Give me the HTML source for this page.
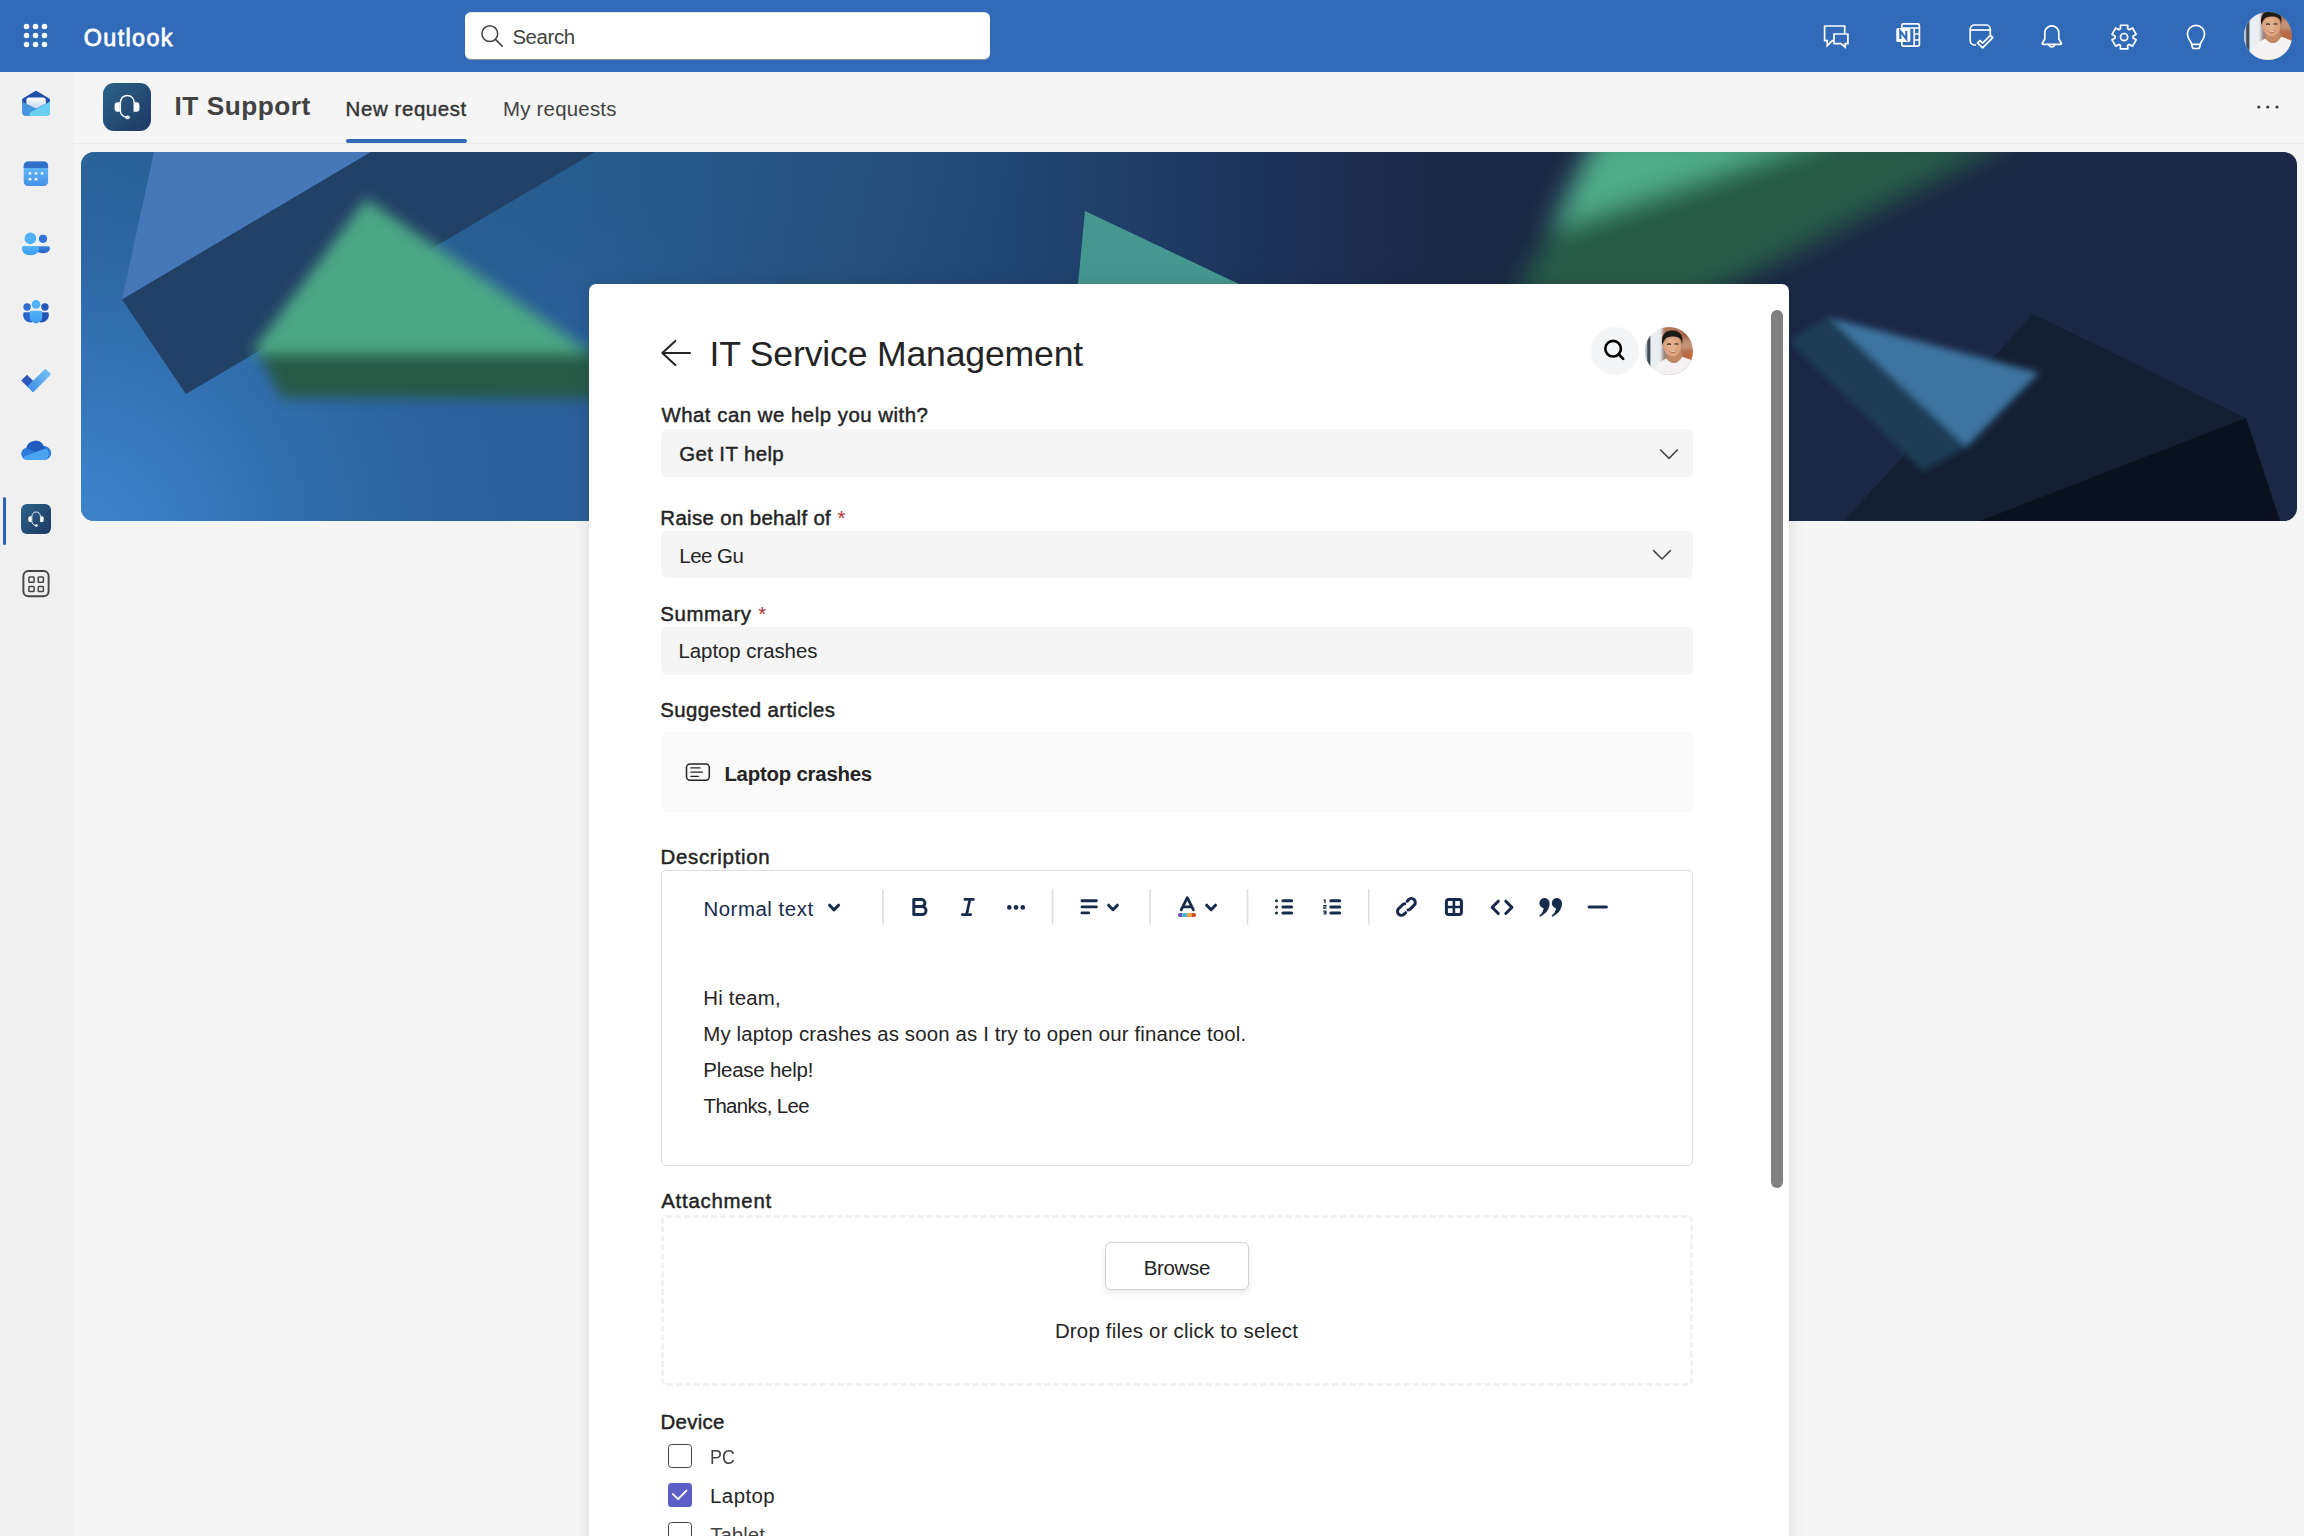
<!DOCTYPE html>
<html lang="en"><head><meta charset="utf-8"><title>IT Support - Outlook</title>
<style>
*{margin:0;padding:0;box-sizing:border-box}
html,body{width:2304px;height:1536px;overflow:hidden;background:#f5f5f5;font-family:"Liberation Sans",sans-serif}
.a{position:absolute}
.t{position:absolute;white-space:nowrap;line-height:1}
.s{-webkit-text-stroke:0.45px currentColor}
.b{font-weight:bold}
svg{position:absolute;left:0;top:0;overflow:visible}
#root{position:absolute;left:0;top:0;width:2304px;height:1536px;overflow:hidden;background:#f5f5f5}
</style></head><body>
<div id="root">
<!-- top bar -->
<div class="a" style="left:0;top:0;width:2304px;height:72px;background:#316ab8"></div>
<div class="a" style="left:465px;top:12px;width:525px;height:47.5px;background:#fff;border-radius:6px;border-top:1px solid #e4e4e4;border-bottom:1.5px solid #8d9198"></div>
<!-- rail -->
<div class="a" style="left:0;top:72px;width:73px;height:1464px;background:#f0f0f0"></div>
<div class="a" style="left:3px;top:497px;width:3px;height:48px;border-radius:2px;background:#2f62b5"></div>
<!-- app header -->
<div class="a" style="left:73px;top:143px;width:2231px;height:1px;background:#e9e9e9"></div>
<div class="a" style="left:346px;top:139px;width:121px;height:4px;border-radius:2px;background:#3069b8"></div>
<div class="a" style="left:103px;top:83px;width:48px;height:48px;border-radius:11px;background:linear-gradient(135deg,#2b6388 0%,#1d3864 100%)"></div>
<div class="a" style="left:21px;top:504px;width:30px;height:30px;border-radius:6px;background:linear-gradient(135deg,#2b6388 0%,#1d3864 100%)"></div>
<!-- banner -->
<svg width="2304" height="1536" viewBox="0 0 2304 1536">
<defs>
<clipPath id="bc"><rect x="81" y="152" width="2216" height="369" rx="13" ry="13"/></clipPath>
<linearGradient id="bg1" gradientUnits="userSpaceOnUse" x1="81" y1="0" x2="1470" y2="0">
<stop offset="0" stop-color="#2b619b"/><stop offset="0.36" stop-color="#2a5d96"/><stop offset="0.45" stop-color="#28578b"/><stop offset="0.52" stop-color="#265180"/><stop offset="0.66" stop-color="#224775"/><stop offset="0.79" stop-color="#1e3a62"/><stop offset="0.92" stop-color="#1c2d4f"/><stop offset="1" stop-color="#1b2845"/>
</linearGradient>
<radialGradient id="bg2" gradientUnits="userSpaceOnUse" cx="81" cy="540" r="640">
<stop offset="0" stop-color="#3d86cf" stop-opacity="0.95"/><stop offset="0.12" stop-color="#3c84cc" stop-opacity="0.85"/><stop offset="0.3" stop-color="#3a80c8" stop-opacity="0.52"/><stop offset="0.5" stop-color="#3576bd" stop-opacity="0.28"/><stop offset="0.75" stop-color="#316dae" stop-opacity="0.12"/><stop offset="1" stop-color="#2f69ab" stop-opacity="0"/>
</radialGradient>
<radialGradient id="bg3" gradientUnits="userSpaceOnUse" cx="0" cy="0" r="1" gradientTransform="translate(330,152) scale(720,210)">
<stop offset="0" stop-color="#235a84" stop-opacity="0.6"/><stop offset="0.5" stop-color="#235a84" stop-opacity="0.38"/><stop offset="1" stop-color="#235a84" stop-opacity="0"/>
</radialGradient>
<filter id="bl8" x="-20%" y="-20%" width="140%" height="140%"><feGaussianBlur stdDeviation="7"/></filter>
<filter id="bl14" x="-20%" y="-40%" width="140%" height="180%"><feGaussianBlur stdDeviation="13"/></filter>
<filter id="bl4" x="-20%" y="-20%" width="140%" height="140%"><feGaussianBlur stdDeviation="3.5"/></filter>
</defs>
<g clip-path="url(#bc)">
<rect x="81" y="152" width="2216" height="369" fill="url(#bg1)"/>
<rect x="81" y="152" width="1100" height="369" fill="url(#bg3)"/>
<rect x="81" y="152" width="900" height="369" fill="url(#bg2)"/>
<!-- left shapes -->
<polygon points="154,152 371,152 122,299.5" fill="#4577b9"/>
<polygon points="371,152 595,152 186,394 122,299.5" fill="#224166"/>
<g filter="url(#bl8)">
<polygon points="256,350 282,398 640,398 640,350" fill="#255a46"/>
<polygon points="366,199 251,353 640,353 592,353" fill="#4ca785"/>
</g>
<!-- teal triangle -->
<polygon points="1085,211 1240,284.5 1078,284.5" fill="#459890"/>
<!-- top right green -->
<g filter="url(#bl14)">
<polygon points="1800,136 2020,136 1700,300 1512,300 1552,228" fill="#265b46"/>
<polygon points="1598,132 1840,132 1550,230" fill="#50ad89"/>
</g>
<!-- right dark shapes -->
<polygon points="2033,314 2246,418 2280,521 1844,521" fill="#141f33"/>
<polygon points="2246,418 2280,521 1980,521" fill="#0a111e"/>
<g filter="url(#bl4)">
<polygon points="1829,317.5 1788,340 1923,471 1966.5,447" fill="#1e3c54"/>
<polygon points="1829,317.5 2039,373 1966.5,447" fill="#3c74a0"/>
</g>
</g>
</svg>
<!-- header + rail icons -->
<svg width="2304" height="1536" viewBox="0 0 2304 1536">
<defs>
<linearGradient id="gpaper" x1="0" y1="0" x2="0" y2="1"><stop offset="0" stop-color="#ffffff"/><stop offset="1" stop-color="#c6d4ec"/></linearGradient>
<linearGradient id="gcal" x1="0" y1="0" x2="0" y2="1"><stop offset="0.25" stop-color="#64b7f9"/><stop offset="1" stop-color="#4390e6"/></linearGradient>
<linearGradient id="gp1" x1="0" y1="0" x2="0" y2="1"><stop offset="0" stop-color="#52b4fa"/><stop offset="1" stop-color="#3d9bef"/></linearGradient>
<linearGradient id="gp2" x1="0" y1="0" x2="0" y2="1"><stop offset="0" stop-color="#3a84df"/><stop offset="1" stop-color="#2660c4"/></linearGradient>
<linearGradient id="gtodo" x1="0" y1="1" x2="1" y2="0"><stop offset="0" stop-color="#3b8be6"/><stop offset="1" stop-color="#7cc4f6"/></linearGradient>
<clipPath id="avc"><circle cx="0" cy="0" r="24"/></clipPath>
<filter id="avb" x="-10%" y="-10%" width="120%" height="120%"><feGaussianBlur stdDeviation="0.75"/></filter>
<filter id="avb2" x="-10%" y="-10%" width="120%" height="120%"><feGaussianBlur stdDeviation="1.6"/></filter>




</defs>
<!-- waffle -->
<g fill="#fff">
<circle cx="26.5" cy="26.5" r="2.75"/><circle cx="35.5" cy="26.5" r="2.75"/><circle cx="44.5" cy="26.5" r="2.75"/>
<circle cx="26.5" cy="35.5" r="2.75"/><circle cx="35.5" cy="35.5" r="2.75"/><circle cx="44.5" cy="35.5" r="2.75"/>
<circle cx="26.5" cy="44.5" r="2.75"/><circle cx="35.5" cy="44.5" r="2.75"/><circle cx="44.5" cy="44.5" r="2.75"/>
</g>
<!-- search icon -->
<g fill="none" stroke="#424242" stroke-width="1.5" stroke-linecap="round"><circle cx="489.8" cy="33.7" r="7.9"/><path d="M495.5 39.4 L502.2 46.1"/></g>
<!-- header right icons -->
<g fill="none" stroke="#fff" stroke-width="1.7" stroke-linejoin="miter">
<path d="M1844.7 33.6 V26 H1824.6 V40.6 H1827.3 V45.6 L1832.3 40.6 H1833.8"/>
<path d="M1834 34 H1847.9 V43.6 H1845.2 V47.2 L1841 43.6 H1834 Z"/>
</g>
<!-- onenote -->
<g fill="none" stroke="#fff" stroke-width="1.7">
<path d="M1901.8 28 V25.4 a1.6 1.6 0 0 1 1.6 -1.6 H1917.8 a1.6 1.6 0 0 1 1.6 1.6 V44.6 a1.6 1.6 0 0 1 -1.6 1.6 H1903.4 a1.6 1.6 0 0 1 -1.6 -1.6 V42"/>
<path d="M1903 28 H1919.4 M1914.2 28 V46 M1914.2 34 H1919.4 M1914.2 40 H1919.4"/>
</g>
<rect x="1896.3" y="27.9" width="14" height="14.2" rx="1.6" fill="#fff"/>
<path d="M1900.3 38.9 V31.1 L1906.3 38.9 V31.1" fill="none" stroke="#3069b8" stroke-width="2.1" stroke-linejoin="miter"/>
<!-- calendar check -->
<g fill="none" stroke="#fff" stroke-width="1.7" stroke-linejoin="round">
<path d="M1990.3 35.6 V29.2 a4.2 4.2 0 0 0 -4.2 -4.2 H1974.4 a4.2 4.2 0 0 0 -4.2 4.2 V40.8 a4.2 4.2 0 0 0 4.2 4.2 H1976.2"/>
<path d="M1970.2 30 H1990.3"/>
<path d="M1977.6 42.9 L1980 40.5 L1982.6 43.1 L1990.4 35.3 L1992.8 37.7 L1982.6 47.9 Z"/>
</g>
<!-- bell -->
<g fill="none" stroke="#fff" stroke-width="1.7" stroke-linejoin="round">
<path d="M2051.8 25.8 a7 7 0 0 0 -7 7 v6.2 l-2.5 4.2 a0.8 0.8 0 0 0 0.7 1.2 h17.6 a0.8 0.8 0 0 0 0.7 -1.2 l-2.5 -4.2 v-6.2 a7 7 0 0 0 -7 -7 z"/>
<path d="M2049 44.8 a2.9 2.9 0 0 0 5.6 0"/>
</g>
<!-- gear -->
<g fill="none" stroke="#fff" stroke-width="1.7" stroke-linejoin="round">
<path d="M2120.43 28.88 L2120.44 25.25 L2127.76 25.25 L2127.77 28.88 L2129.38 29.81 L2132.53 28.00 L2136.19 34.35 L2133.05 36.17 L2133.05 38.03 L2136.19 39.85 L2132.53 46.20 L2129.38 44.39 L2127.77 45.32 L2127.76 48.95 L2120.44 48.95 L2120.43 45.32 L2118.82 44.39 L2115.67 46.20 L2112.01 39.85 L2115.15 38.03 L2115.15 36.17 L2112.01 34.35 L2115.67 28.00 L2118.82 29.81 Z"/>
<circle cx="2124.1" cy="37.1" r="3.6"/>
</g>
<!-- bulb -->
<g fill="none" stroke="#fff" stroke-width="1.7" stroke-linejoin="round">
<path d="M2191.7 44.4 c-0.5 -3.4 -4.3 -5.2 -4.3 -10.4 a8.6 8.6 0 0 1 17.2 0 c0 5.2 -3.8 7 -4.3 10.4 z"/>
<path d="M2191.7 44.4 l0.5 2.6 a1.9 1.9 0 0 0 1.9 1.5 h3.8 a1.9 1.9 0 0 0 1.9 -1.5 l0.5 -2.6"/>
</g>
<g transform="translate(2268,36)"><g><g clip-path="url(#avc)"><g><g>
 <g filter="url(#avb2)">
 <rect x="-36" y="-40" width="72" height="80" fill="#b2775a"/>
 <rect x="12" y="-34" width="26" height="16" fill="#a5684c"/>
 <rect x="12" y="-16" width="26" height="9" fill="#c49376"/>
 <rect x="14" y="-5" width="24" height="11" fill="#bb6b42"/>
 <rect x="-8" y="-10" width="9" height="16" fill="#9a837a"/>
 <rect x="-36" y="-40" width="29" height="80" fill="#e9eef2"/>
 </g>
 <g filter="url(#avb)">
 <rect x="-24.8" y="-40" width="3" height="80" fill="#b9c3c8"/>
 <rect x="-21.8" y="-40" width="3.2" height="80" fill="#3f4e56"/>
 <path d="M-36 40 V22 L-17 14.5 C-12 8 -6 4.2 -2.6 2.6 C0 6 3 7 5 7 C8 7 11 4.4 13 0.8 C17 2 21 3.6 24 4.8 L36 9 V40 Z" fill="#f4f2f2"/>
 <path d="M-2.6 2.6 C0 6 3 7 5 7 C8 7 11 4.4 13 0.8 L12 -6 H0 Z" fill="#c28763"/>
 <ellipse cx="3.4" cy="-10" rx="8.9" ry="10.4" fill="#dba37e"/>
 <ellipse cx="2.2" cy="-11" rx="5" ry="6.5" fill="#e9bd9b" opacity="0.5"/>
 <path d="M-6.6 -11 C-8.6 -21.5 -3 -26 4 -25.4 C11 -25 15 -20.5 13 -11.5 C12.8 -15.5 11.6 -17.8 9.6 -18.6 C6 -20 0 -19.6 -2.6 -18 C-4.6 -16.6 -5.6 -14.4 -6.6 -11 Z" fill="#1e1a18"/>
 <path d="M-2 -11.6 q2 -1 4 0 M5.4 -11.8 q2 -1 4 0" fill="none" stroke="#2b1f1a" stroke-width="1.1"/>
 <path d="M-0.4 -5.2 C2 -3.6 5.6 -3.6 8 -5.6 C6 -2.2 1.6 -2.2 -0.4 -5.2 Z" fill="#c2675b"/>
 <path d="M0.4 -5 C2.6 -4.2 5.2 -4.2 7.2 -5.2 C5.4 -3.6 2.2 -3.6 0.4 -5 Z" fill="#f3e7e2"/>
 </g>
</g></g></g></g></g>
<g fill="#3a3a3a"><circle cx="2258.8" cy="107" r="1.6"/><circle cx="2267.8" cy="107" r="1.6"/><circle cx="2277" cy="107" r="1.6"/></g>
<!-- headsets -->
<g transform="translate(127,106.8)"><g fill="#fff" stroke="none">
 <path d="M7.2 4.4 V-3.5 C7.2 -8.5 4.2 -11.3 0.25 -11.3 C-3.7 -11.3 -6.7 -8.5 -6.7 -3.5 V3.5 C-6.7 7.6 -3.6 9.8 -0.8 10.4" fill="none" stroke="#fff" stroke-width="1.4" stroke-linecap="round"/>
 <path d="M-7.2 -4.5 H-9.4 a3 3 0 0 0 -3 3 V1.85 a3 3 0 0 0 3 3 H-7.2 Z"/>
 <path d="M7.7 -4.5 H9.45 a3 3 0 0 1 3 3 V1.85 a3 3 0 0 1 -3 3 H7.7 Z"/>
 <ellipse cx="0.5" cy="10.55" rx="2.3" ry="1.9"/>
</g></g>
<g transform="translate(36,519) scale(0.62)"><g fill="#fff" stroke="none">
 <path d="M7.2 4.4 V-3.5 C7.2 -8.5 4.2 -11.3 0.25 -11.3 C-3.7 -11.3 -6.7 -8.5 -6.7 -3.5 V3.5 C-6.7 7.6 -3.6 9.8 -0.8 10.4" fill="none" stroke="#fff" stroke-width="1.4" stroke-linecap="round"/>
 <path d="M-7.2 -4.5 H-9.4 a3 3 0 0 0 -3 3 V1.85 a3 3 0 0 0 3 3 H-7.2 Z"/>
 <path d="M7.7 -4.5 H9.45 a3 3 0 0 1 3 3 V1.85 a3 3 0 0 1 -3 3 H7.7 Z"/>
 <ellipse cx="0.5" cy="10.55" rx="2.3" ry="1.9"/>
</g></g>
<!-- rail: mail -->
<path d="M36 92.2 L48.6 99.6 V108 H23.4 V99.6 Z" fill="#1e4ea8" stroke="#1e4ea8" stroke-width="2.6" stroke-linejoin="round"/>
<rect x="26.4" y="97.4" width="19.4" height="11.4" rx="2.8" fill="url(#gpaper)"/>
<path d="M22 101.6 L36 108.4 L50 101.6 V112 a4 4 0 0 1 -4 4 H26 a4 4 0 0 1 -4 -4 Z" fill="#4795de"/>
<path d="M50 101.8 V112 a4 4 0 0 1 -4 4 H31.4 a2 2 0 0 1 -0.9 -3.8 Z" fill="#6bd0f3"/>
<!-- rail: calendar -->
<rect x="23.7" y="161.5" width="24.4" height="24.6" rx="4.2" fill="url(#gcal)"/>
<path d="M23.7 168 V165.7 a4.2 4.2 0 0 1 4.2 -4.2 H43.9 a4.2 4.2 0 0 1 4.2 4.2 V168 Z" fill="#3070c9"/>
<g fill="#e6f6ff"><circle cx="30" cy="173.4" r="1.45"/><circle cx="36" cy="173.4" r="1.45"/><circle cx="42" cy="173.4" r="1.45"/><circle cx="30" cy="179.2" r="1.45"/><circle cx="36" cy="179.2" r="1.45"/></g>
<!-- rail: people -->
<circle cx="43" cy="238.8" r="4.1" fill="#2f74d6"/>
<path d="M36 246.3 H48.2 a1.8 1.8 0 0 1 1.8 1.8 C50 251.5 47 253.2 43 253.2 C40 253.2 37.5 252.4 36 250.5 Z" fill="url(#gp2)"/>
<circle cx="30.4" cy="238.4" r="5.8" fill="#4fb1f8"/>
<path d="M23.8 246 H37.2 a1.9 1.9 0 0 1 1.9 1.9 C39.1 252.6 35.4 255.2 30.5 255.2 C25.6 255.2 21.9 252.6 21.9 247.9 a1.9 1.9 0 0 1 1.9 -1.9 Z" fill="url(#gp1)"/>
<!-- rail: groups -->
<circle cx="27.1" cy="307" r="3.7" fill="#2d6ed2"/><circle cx="44.9" cy="307" r="3.7" fill="#2558b8"/>
<path d="M24.6 312.3 H32 V322.4 C27.5 322.8 23.2 320 23.2 315.2 V313.7 a1.4 1.4 0 0 1 1.4 -1.4 Z" fill="#2a66c8"/>
<path d="M47.4 312.3 H40 V322.4 C44.5 322.8 48.8 320 48.8 315.2 V313.7 a1.4 1.4 0 0 0 -1.4 -1.4 Z" fill="#2355b3"/>
<circle cx="36" cy="304.4" r="4.3" fill="#4fb0f8"/>
<path d="M31.4 310.8 H40.6 a1.6 1.6 0 0 1 1.6 1.6 V317.2 a6.2 6.2 0 0 1 -12.4 0 V312.4 a1.6 1.6 0 0 1 1.6 -1.6 Z" fill="url(#gp1)"/>
<!-- rail: todo -->
<polygon points="21.2,380.5 27,374.7 34,381.7 28.2,387.5" fill="#2b56ba"/>
<path d="M44.4 369.4 a1.4 1.4 0 0 1 2 0 L50.2 373.2 a1.4 1.4 0 0 1 0 2 L34 391.4 a1.4 1.4 0 0 1 -2 0 L27.2 386.6 Z" fill="url(#gtodo)"/>
<!-- rail: onedrive -->
<path d="M27 460 a6.2 6.2 0 0 1 -0.6 -12.3 a9.2 9.2 0 0 1 17.2 -1.6 a7 7 0 0 1 1.6 13.9 Z" fill="#2f7bd9"/>
<path d="M26.4 447.7 a9.2 9.2 0 0 1 17.2 -1.6 L47 449 L36 452.5 Z" fill="#1f5cbe"/>
<path d="M23 457 L36.5 451.8 L46 448.2 a7 7 0 0 1 -0.8 11.8 H27 a6.2 6.2 0 0 1 -4 -3 Z" fill="#49a3ee"/>
<!-- rail: apps -->
<g fill="none" stroke="#454545">
<rect x="23.4" y="571" width="25.2" height="25.2" rx="5" stroke-width="1.9"/>
<g stroke-width="1.5"><rect x="28.9" y="577" width="5.2" height="5.2" rx="0.8"/><rect x="38.2" y="577" width="5.2" height="5.2" rx="0.8"/><rect x="28.9" y="586.4" width="5.2" height="5.2" rx="0.8"/><rect x="38.2" y="586.4" width="5.2" height="5.2" rx="0.8"/></g>
</g>
</svg>
<!-- card -->
<div class="a" style="left:589px;top:284px;width:1200px;height:1270px;background:#fff;border-radius:7px 7px 0 0;box-shadow:0 0 18px rgba(0,0,0,.11)"></div>
<div class="a" style="left:1771px;top:310px;width:12px;height:878px;border-radius:6px;background:#808080"></div>
<div class="a" style="left:1591px;top:327px;width:48px;height:48px;border-radius:24px;background:#f4f5f7"></div>
<div class="a" style="left:661px;top:429px;width:1032px;height:48px;border-radius:6px;background:#f5f5f5"></div>
<div class="a" style="left:661px;top:531px;width:1032px;height:46.5px;border-radius:6px;background:#f5f5f5"></div>
<div class="a" style="left:661px;top:627px;width:1032px;height:47.5px;border-radius:6px;background:#f5f5f5"></div>
<div class="a" style="left:661px;top:732px;width:1032px;height:80px;border-radius:6px;background:#fafafa"></div>
<div class="a" style="left:660.5px;top:869.8px;width:1032.8px;height:296.2px;border-radius:5px;border:1.5px solid #dcdfe4"></div>
<div class="a" style="left:661px;top:1215px;width:1032px;height:171px;border-radius:5px;border:3px dashed #f0f1f4"></div>
<div class="a" style="left:1105px;top:1242px;width:144px;height:47.5px;border-radius:6px;border:1px solid #d1d1d1;background:#fff;box-shadow:0 3px 6px rgba(0,0,0,.09)"></div>
<!-- checkboxes -->
<div class="a" style="left:668px;top:1444px;width:24px;height:24px;border-radius:3.6px;border:1.5px solid #424242;background:#fff"></div>
<div class="a" style="left:668px;top:1483px;width:24px;height:24px;border-radius:3.6px;background:#5b5fc7"></div>
<div class="a" style="left:668px;top:1522px;width:24px;height:24px;border-radius:3.6px;border:1.5px solid #424242;background:#fff"></div>
<svg width="2304" height="1536" viewBox="0 0 2304 1536">
<!-- back arrow -->
<path d="M690 353 H662.3 M675.3 340.9 L662.3 353 L675.3 365.1" fill="none" stroke="#242424" stroke-width="2" stroke-linecap="round" stroke-linejoin="round"/>
<!-- magnifier -->
<g fill="none" stroke="#000" stroke-width="2.6" stroke-linecap="round"><circle cx="1613.1" cy="348.7" r="7.8"/><path d="M1618.9 354.5 L1623.2 358.8"/></g>
<g transform="translate(1669,351)"><g><g clip-path="url(#avc)"><g transform="translate(0,5)"><g>
 <g filter="url(#avb2)">
 <rect x="-36" y="-40" width="72" height="80" fill="#b2775a"/>
 <rect x="12" y="-34" width="26" height="16" fill="#a5684c"/>
 <rect x="12" y="-16" width="26" height="9" fill="#c49376"/>
 <rect x="14" y="-5" width="24" height="11" fill="#bb6b42"/>
 <rect x="-8" y="-10" width="9" height="16" fill="#9a837a"/>
 <rect x="-36" y="-40" width="29" height="80" fill="#e9eef2"/>
 </g>
 <g filter="url(#avb)">
 <rect x="-24.8" y="-40" width="3" height="80" fill="#b9c3c8"/>
 <rect x="-21.8" y="-40" width="3.2" height="80" fill="#3f4e56"/>
 <path d="M-36 40 V22 L-17 14.5 C-12 8 -6 4.2 -2.6 2.6 C0 6 3 7 5 7 C8 7 11 4.4 13 0.8 C17 2 21 3.6 24 4.8 L36 9 V40 Z" fill="#f4f2f2"/>
 <path d="M-2.6 2.6 C0 6 3 7 5 7 C8 7 11 4.4 13 0.8 L12 -6 H0 Z" fill="#c28763"/>
 <ellipse cx="3.4" cy="-10" rx="8.9" ry="10.4" fill="#dba37e"/>
 <ellipse cx="2.2" cy="-11" rx="5" ry="6.5" fill="#e9bd9b" opacity="0.5"/>
 <path d="M-6.6 -11 C-8.6 -21.5 -3 -26 4 -25.4 C11 -25 15 -20.5 13 -11.5 C12.8 -15.5 11.6 -17.8 9.6 -18.6 C6 -20 0 -19.6 -2.6 -18 C-4.6 -16.6 -5.6 -14.4 -6.6 -11 Z" fill="#1e1a18"/>
 <path d="M-2 -11.6 q2 -1 4 0 M5.4 -11.8 q2 -1 4 0" fill="none" stroke="#2b1f1a" stroke-width="1.1"/>
 <path d="M-0.4 -5.2 C2 -3.6 5.6 -3.6 8 -5.6 C6 -2.2 1.6 -2.2 -0.4 -5.2 Z" fill="#c2675b"/>
 <path d="M0.4 -5 C2.6 -4.2 5.2 -4.2 7.2 -5.2 C5.4 -3.6 2.2 -3.6 0.4 -5 Z" fill="#f3e7e2"/>
 </g>
</g></g></g></g></g>
<!-- chevrons -->
<g fill="none" stroke="#424242" stroke-width="1.5" stroke-linecap="round" stroke-linejoin="round">
<path d="M1660.6 450 L1669 458.4 L1677.4 450"/>
<path d="M1653.6 550.6 L1662 559 L1670.4 550.6"/>
</g>
<!-- article icon -->
<g fill="none" stroke="#242424" stroke-linecap="round">
<rect x="686.5" y="764" width="22.8" height="16.2" rx="3.6" stroke-width="1.5"/>
<path d="M690.8 767.9 H700 M690.8 772.1 H702.4 M690.8 776.3 H698.4" stroke-width="1.3"/>
</g>
<!-- toolbar -->
<g fill="#dcdee6"><rect x="882.1" y="889.2" width="1.6" height="35.4"/><rect x="1051.7" y="889.2" width="1.6" height="35.4"/><rect x="1149.2" y="889.2" width="1.6" height="35.4"/><rect x="1246.7" y="889.2" width="1.6" height="35.4"/><rect x="1368" y="889.2" width="1.6" height="35.4"/></g>
<g fill="none" stroke="#172b4d" stroke-width="3" stroke-linecap="round" stroke-linejoin="round">
<path d="M829.6 905.2 L834 909.9 L838.5 905.2"/>
<path d="M1108.6 905.2 L1113 909.7 L1117.4 905.2"/>
<path d="M1206.7 905.2 L1211.1 909.7 L1215.5 905.2"/>
<!-- bold -->
<path d="M913.8 899.4 V914.6 H922 a4 4 0 0 0 0 -8 H913.8 M913.8 899.4 H921.3 a3.6 3.6 0 0 1 0 7.2" stroke-width="3"/>
<!-- italic -->
<path d="M964.9 899.4 H973.4 M962.3 914.6 H970.8 M969.9 899.4 L966.6 914.6" stroke-width="2.7"/>
<!-- align -->
<path d="M1082 900.8 H1096.4 M1082 906.9 H1096.4 M1082 912.9 H1088.6" stroke-width="2.9"/>
<!-- A -->
<path d="M1181.2 909.8 L1187.3 897.7 L1193.4 909.8 M1183.4 906.9 H1191.2" stroke-width="2.8"/>
<!-- bullets -->
<path d="M1282.9 900.8 H1291.6 M1282.9 906.9 H1291.6 M1282.9 912.9 H1291.6"/>
<!-- numbered -->
<path d="M1330.8 900.8 H1339.7 M1330.8 906.9 H1339.7 M1330.8 912.9 H1339.7"/>
<!-- link -->
<path d="M1407.2 901.1 L1408.64 899.64 A3.9 3.9 0 0 1 1414.16 905.16 L1410.46 908.86 A3.9 3.9 0 0 1 1408 910"/>
<path d="M1405.6 912.7 L1404.16 914.16 A3.9 3.9 0 0 1 1398.64 908.64 L1402.34 904.94 A3.9 3.9 0 0 1 1404.8 903.8"/>
<!-- table -->
<rect x="1446.4" y="899.5" width="15" height="15" rx="2.3"/>
<path d="M1453.9 899.5 V914.5 M1446.4 907 H1461.4" stroke-width="2.6"/>
<!-- code -->
<path d="M1498.3 901.2 L1492.2 907.35 L1498.3 913.5 M1505.8 901.2 L1511.9 907.35 L1505.8 913.5"/>
<!-- divider -->
<path d="M1589.1 906.9 H1606.4"/>
</g>
<g fill="#172b4d">
<circle cx="1009.3" cy="907.4" r="2.3"/><circle cx="1016" cy="907.4" r="2.3"/><circle cx="1022.8" cy="907.4" r="2.3"/>
<circle cx="1276.5" cy="900.8" r="1.5"/><circle cx="1276.5" cy="906.9" r="1.5"/><circle cx="1276.5" cy="912.9" r="1.5"/>
<!-- numerals -->
<path d="M1323.3 899.4 h2.4 v3.9 h-1.4 v-2.7 h-1z M1323.2 905 h3.2 v2.3 h-1.9 v0.4 h1.9 v1.1 h-3.2 v-2.3 h1.9 v-0.4 h-1.9z M1323.2 910.6 h3.4 v4 h-3.4 v-1.1 h2.1 v-0.5 h-1.5 v-0.9 h1.5 v-0.4 h-2.1z"/>
<!-- quote -->
<path d="M1549.60 903.20 A5.1 5.1 0 1 0 1543.60 908.22 C1543.20 911.60 1541.70 914.00 1539.20 915.40 l0.7 1.25 C1544.90 914.50 1549.60 909.80 1549.60 903.20 Z"/>
<path d="M1562.00 903.20 A5.1 5.1 0 1 0 1556.00 908.22 C1555.60 911.60 1554.10 914.00 1551.60 915.40 l0.7 1.25 C1557.30 914.50 1562.00 909.80 1562.00 903.20 Z"/>
</g>
<!-- color bar -->
<path d="M1179.9 913.1 h2.4 v3.9 h-2.4 a1.95 1.95 0 0 1 0 -3.9z" fill="#6b51c4"/><rect x="1182.3" y="913.1" width="4.7" height="3.9" fill="#3fb6d8"/><rect x="1187" y="913.1" width="4.6" height="3.9" fill="#f0a23b"/><path d="M1191.6 913.1 h2.5 a1.95 1.95 0 0 1 0 3.9 h-2.5z" fill="#d04a23"/>
<!-- check mark -->
<path d="M672.9 1494.1 L678.1 1499.1 L686.4 1490.6" fill="none" stroke="#fff" stroke-width="2" stroke-linecap="round" stroke-linejoin="round"/>
</svg>
<div class="t s" style="left:83.74px;top:26.76px;font-size:23.33px;letter-spacing:1.392px;color:#ffffff;-webkit-text-stroke:0.8px #fff">Outlook</div>
<div class="t" style="left:512.41px;top:27.0px;font-size:20.41px;letter-spacing:-0.402px;color:#424242">Search</div>
<div class="t b" style="left:174.57px;top:93.3px;font-size:26.24px;letter-spacing:0.507px;color:#424242">IT Support</div>
<div class="t s" style="left:345.59px;top:98.5px;font-size:20.41px;letter-spacing:0.611px;color:#333333">New request</div>
<div class="t" style="left:503.04px;top:98.75px;font-size:20.41px;letter-spacing:0.223px;color:#424242">My requests</div>
<div class="t" style="left:709.45px;top:336.9px;font-size:35.6px;letter-spacing:-0.167px;color:#242424">IT Service Management</div>
<div class="t s" style="left:661.42px;top:405.25px;font-size:20.41px;letter-spacing:0.497px;color:#242424">What can we help you with?</div>
<div class="t s" style="left:679.28px;top:444.0px;font-size:20.41px;letter-spacing:0.38px;color:#242424">Get IT help</div>
<div class="t s" style="left:660.34px;top:507.75px;font-size:20.41px;letter-spacing:0.351px;color:#242424">Raise on behalf of</div>
<div class="t" style="left:837.4px;top:508.0px;font-size:20.41px;letter-spacing:0.0px;color:#bc2f32">*</div>
<div class="t" style="left:679.29px;top:545.5px;font-size:20.41px;letter-spacing:-0.472px;color:#242424">Lee Gu</div>
<div class="t s" style="left:660.29px;top:604.0px;font-size:20.41px;letter-spacing:0.572px;color:#242424">Summary</div>
<div class="t" style="left:758.15px;top:604.25px;font-size:20.41px;letter-spacing:0.0px;color:#bc2f32">*</div>
<div class="t" style="left:678.54px;top:640.5px;font-size:20.41px;letter-spacing:-0.053px;color:#242424">Laptop crashes</div>
<div class="t s" style="left:660.29px;top:699.75px;font-size:20.41px;letter-spacing:0.393px;color:#242424">Suggested articles</div>
<div class="t b" style="left:724.39px;top:763.75px;font-size:20.41px;letter-spacing:-0.23px;color:#242424">Laptop crashes</div>
<div class="t s" style="left:660.49px;top:846.65px;font-size:20.41px;letter-spacing:0.715px;color:#242424">Description</div>
<div class="t" style="left:703.49px;top:898.7px;font-size:20.41px;letter-spacing:0.526px;color:#172B4D">Normal text</div>
<div class="t" style="left:703.29px;top:987.85px;font-size:20.41px;letter-spacing:0.201px;color:#242424">Hi team,</div>
<div class="t" style="left:703.29px;top:1023.85px;font-size:20.41px;letter-spacing:0.147px;color:#242424">My laptop crashes as soon as I try to open our finance tool.</div>
<div class="t" style="left:703.29px;top:1059.9px;font-size:20.41px;letter-spacing:-0.207px;color:#242424">Please help!</div>
<div class="t" style="left:703.55px;top:1095.9px;font-size:20.41px;letter-spacing:-0.636px;color:#242424">Thanks, Lee</div>
<div class="t s" style="left:661.17px;top:1191.35px;font-size:20.41px;letter-spacing:0.757px;color:#242424">Attachment</div>
<div class="t" style="left:1143.69px;top:1257.6px;font-size:20.41px;letter-spacing:-0.29px;color:#242424">Browse</div>
<div class="t" style="left:1054.89px;top:1320.75px;font-size:20.41px;letter-spacing:0.217px;color:#242424">Drop files or click to select</div>
<div class="t s" style="left:660.49px;top:1411.75px;font-size:20.41px;letter-spacing:0.285px;color:#242424">Device</div>
<div class="t" style="left:710.29px;top:1446.7px;font-size:20.41px;letter-spacing:0.0px;color:#424242;transform:scaleX(0.8737);transform-origin:0 0">PC</div>
<div class="t" style="left:710.09px;top:1485.7px;font-size:20.41px;letter-spacing:0.445px;color:#242424">Laptop</div>
<div class="t" style="left:710.25px;top:1524.8px;font-size:20.41px;letter-spacing:0.03px;color:#424242">Tablet</div>
</div>
</body></html>
